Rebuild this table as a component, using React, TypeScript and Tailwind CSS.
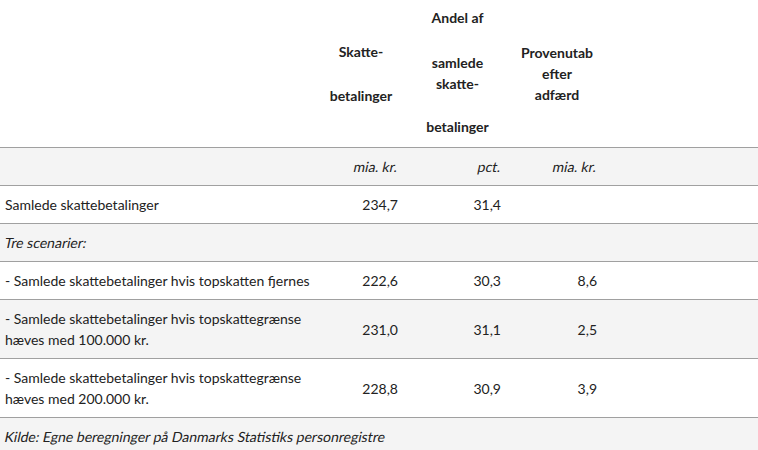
import React from 'react';

type Row = {
  label: React.ReactNode;
  a?: string;
  b?: string;
  c?: string;
  shaded?: boolean;
};

// skrå tekst som i originalen (syntetisk kursiv af normal vægt)
function Slant({ children }: { children: React.ReactNode }) {
  return <span className="inline-block -skew-x-12">{children}</span>;
}

const rows: Row[] = [
  { label: 'Samlede skattebetalinger', a: '234,7', b: '31,4' },
  { label: <Slant>Tre scenarier:</Slant>, shaded: true },
  { label: '- Samlede skattebetalinger hvis topskatten fjernes', a: '222,6', b: '30,3', c: '8,6' },
  {
    label: (
      <>
        - Samlede skattebetalinger hvis topskattegrænse
        <br />
        hæves med 100.000 kr.
      </>
    ),
    a: '231,0',
    b: '31,1',
    c: '2,5',
    shaded: true,
  },
  {
    label: (
      <>
        - Samlede skattebetalinger hvis topskattegrænse
        <br />
        hæves med 200.000 kr.
      </>
    ),
    a: '228,8',
    b: '30,9',
    c: '3,9',
  },
];

export default function App() {
  return (
    <div className="w-[758px] h-[450px] overflow-hidden bg-white text-[#222] text-[14px] leading-[21px] font-['Lato','Liberation_Sans',sans-serif]">
      <table className="w-full border-collapse table-fixed">
        <colgroup>
          <col className="w-[316px]" />
          <col className="w-[90px]" />
          <col className="w-[103px]" />
          <col className="w-[96px]" />
          <col />
        </colgroup>
        <thead>
          {/* overskrifter */}
          <tr className="font-bold text-center">
            <th></th>
            <th className="px-2 align-middle font-bold">
              <div className="flex flex-col gap-[23px]">
                <span>Skatte-</span>
                <span>betalinger</span>
              </div>
            </th>
            <th className="px-2 pt-[7px] pb-[10px] align-middle font-bold">
              <div className="flex flex-col">
                <span>Andel af</span>
                <span className="mt-[24px]">
                  samlede
                  <br />
                  skatte-
                </span>
                <span className="mt-[22px]">betalinger</span>
              </div>
            </th>
            <th className="px-2 align-middle font-bold">
              Provenutab
              <br />
              efter
              <br />
              adfærd
            </th>
            <th></th>
          </tr>
          {/* enheder */}
          <tr className="bg-[#f4f4f4] border-t border-[#a0a0a0]">
            <td className="py-2"></td>
            <td className="px-2 py-2 text-right"><Slant>mia. kr.</Slant></td>
            <td className="px-2 py-2 text-right"><Slant>pct.</Slant></td>
            <td className="px-2 py-2 text-right"><Slant>mia. kr.</Slant></td>
            <td></td>
          </tr>
        </thead>
        <tbody>
          {rows.map((r, i) => (
            <tr
              key={i}
              className={'border-t border-[#a0a0a0] ' + (r.shaded ? 'bg-[#f4f4f4]' : 'bg-white')}
            >
              <td className="pl-[5px] py-2 align-middle whitespace-nowrap">{r.label}</td>
              <td className="px-2 py-2 text-right align-middle">{r.a}</td>
              <td className="px-2 py-2 text-right align-middle">{r.b}</td>
              <td className="px-2 py-2 text-right align-middle">{r.c}</td>
              <td></td>
            </tr>
          ))}
          <tr className="border-t border-[#a0a0a0] bg-[#f4f4f4]">
            <td colSpan={5} className="pl-[5px] py-2 whitespace-nowrap">
              <Slant>Kilde: Egne beregninger på Danmarks Statistiks personregistre</Slant>
            </td>
          </tr>
        </tbody>
      </table>
    </div>
  );
}
